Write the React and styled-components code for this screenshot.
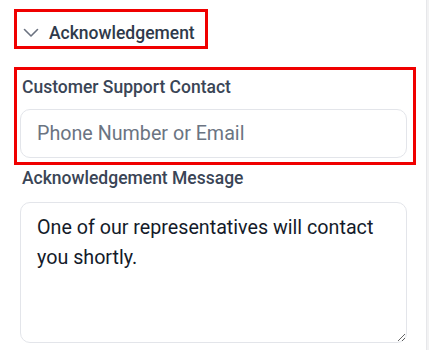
import React from "react";
import styled, { createGlobalStyle } from "styled-components";

const Global = createGlobalStyle`
  html, body { margin: 0; padding: 0; background: #f2f2f3; }
  body { font-family: Roboto, "Noto Sans", "Liberation Sans", sans-serif; }
  * { box-sizing: border-box; }
`;

const Panel = styled.div`
  width: 427px;
  height: 350px;
  background: #ffffff;
  border-right: 1px solid #e6e7ea;
  padding: 9px 0 0 14px;
  display: flex;
  flex-direction: column;
  align-items: flex-start;
  overflow: hidden;
`;

const Highlight = styled.div`
  border: 3px solid #f00000;
  padding: ${(p) => p.$pad};
`;

const SectionHeader = styled.button`
  display: flex;
  align-items: center;
  gap: 10px;
  background: none;
  border: 0;
  padding: 0;
  margin: 0;
  font: inherit;
  font-size: 17.5px;
  line-height: 24px;
  font-weight: 500;
  color: #2f3a4b;
  cursor: pointer;
`;

const Fields = styled.div`
  width: 402px;
  margin-top: ${(p) => p.$top}px;
`;

const Field = styled.div`
  display: flex;
  flex-direction: column;
  width: 387px;
  margin-left: ${(p) => p.$indent || 0}px;
  margin-top: ${(p) => p.$top || 0}px;
`;

const Label = styled.label`
  font-size: 17.5px;
  line-height: 24px;
  font-weight: 500;
  color: #3a4556;
  padding-left: 2px;
  margin-bottom: ${(p) => p.$gap}px;
`;

const Input = styled.input`
  width: 100%;
  height: 49px;
  border: 1px solid #e3e5ea;
  border-radius: 10px;
  padding: 0 16px;
  font-family: inherit;
  font-size: 19.7px;
  color: #1b2230;
  background: #fff;
  outline: none;
  &::placeholder { color: #6b7482; }
`;

const TextArea = styled.textarea`
  width: 100%;
  height: 141px;
  border: 1px solid #e3e5ea;
  border-radius: 10px;
  padding: 10px 16px;
  font-family: inherit;
  font-size: 19.7px;
  line-height: 30px;
  color: #141b2a;
  background: #fff;
  outline: none;
  resize: vertical;
`;

const Chevron = () => (
  <svg width="16" height="10" viewBox="0 0 16 10" fill="none" aria-hidden="true">
    <polyline
      points="1.5,1.5 8,8 14.5,1.5"
      stroke="#6b7280"
      strokeWidth="1.6"
      strokeLinecap="round"
      strokeLinejoin="round"
    />
  </svg>
);

export default function App() {
  return (
    <>
      <Global />
      <Panel>
        <Highlight $pad="9px 10px 1px 6px">
          <SectionHeader type="button">
            <Chevron />
            Acknowledgement
          </SectionHeader>
        </Highlight>
        <Fields $top={18}>
          <Highlight $pad="5px 6px 4px 3px">
            <Field>
              <Label $gap={10}>Customer Support Contact</Label>
              <Input placeholder="Phone Number or Email" />
            </Field>
          </Highlight>
          <Field $indent={6} $top={1}>
            <Label $gap={12}>Acknowledgement Message</Label>
            <TextArea defaultValue="One of our representatives will contact you shortly." />
          </Field>
        </Fields>
      </Panel>
    </>
  );
}
